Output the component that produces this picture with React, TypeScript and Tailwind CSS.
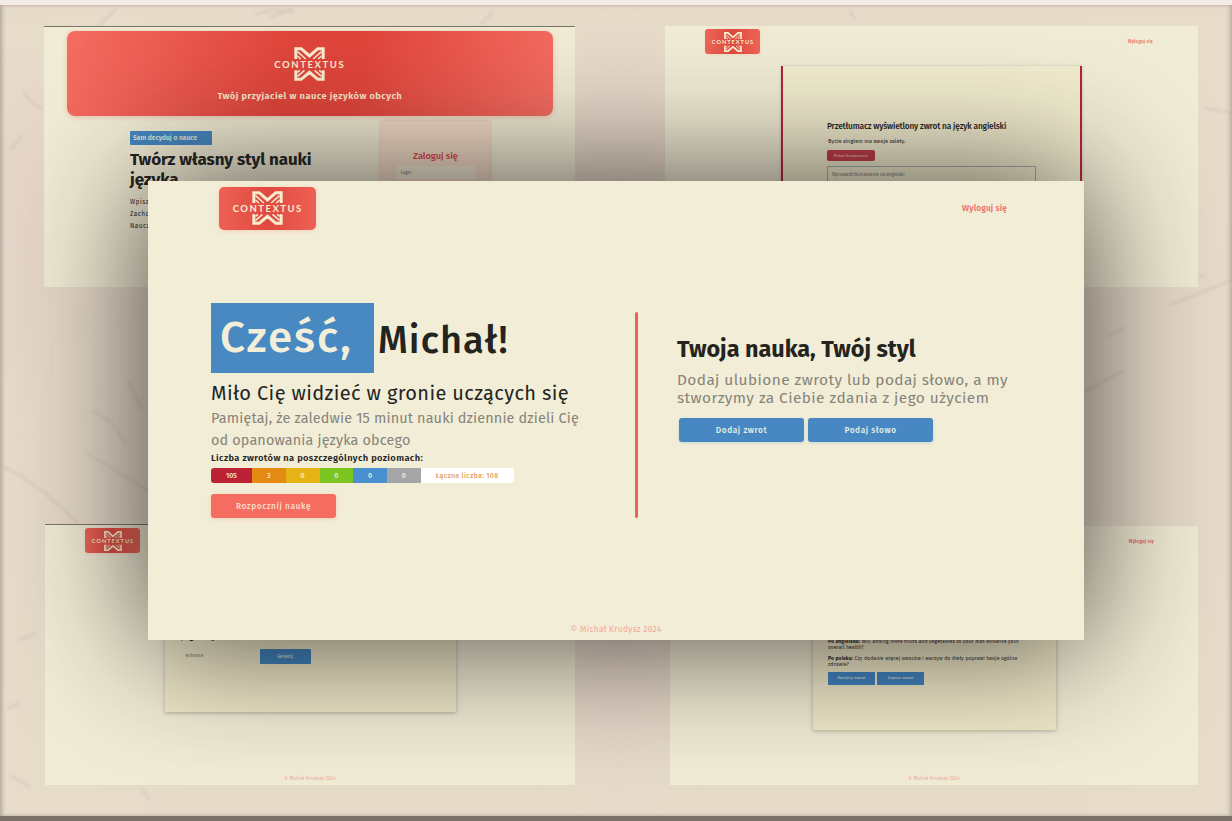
import type { ReactNode } from "react";

function Glyph({ className }: { className: string }) {
  return (
    <svg viewBox="0 0 90 102" className={className} fill="none" stroke="#f9edcf">
      <path d="M4 36V5H20L45 27L70 5H86V36" strokeWidth="9" />
      <path d="M9 14L34 36M9 27L19 36M81 14L56 36M81 27L71 36" strokeWidth="4.5" />
      <path d="M4 70V97H20L45 76L70 97H86V70" strokeWidth="9" />
      <path d="M9 88L30 70M9 76L16 70M81 88L60 70M81 76L74 70" strokeWidth="4.5" />
    </svg>
  );
}

function Logo({ small }: { small?: boolean }) {
  return small ? (
    <div className="grid h-[25px] w-[55px] shrink-0 place-items-center rounded-[3px] bg-linear-to-r from-[#ee6557] via-[#e0493f] to-[#ee6557] shadow-[0_1px_3px_#f3b7a455]">
      <Glyph className="col-start-1 row-start-1 h-[20px] w-[18px]" />
      <span className="col-start-1 row-start-1 pl-[1px] font-['Lato'] text-[5.6px] leading-none font-bold tracking-[1px] text-[#f9edcf]">CONTEXTUS</span>
    </div>
  ) : (
    <div className="grid h-[43.5px] w-[96.5px] shrink-0 place-items-center rounded-[5px] bg-linear-to-r from-[#ee6055] via-[#e0493f] to-[#ee6055] shadow-[0_1px_4px_#f3b7a488]">
      <Glyph className="col-start-1 row-start-1 h-[34px] w-[31px]" />
      <span className="col-start-1 row-start-1 pl-[1px] font-['Lato'] text-[9.5px] leading-none font-bold tracking-[1.5px] text-[#f9edcf]">CONTEXTUS</span>
    </div>
  );
}

function Backdrop() {
  return (
    <svg className="absolute inset-0 h-full w-full" viewBox="0 0 1232 821" preserveAspectRatio="none">
      <defs>
        <filter id="soft"><feGaussianBlur stdDeviation="1.6" /></filter>
        <filter id="cloud"><feGaussianBlur stdDeviation="28" /></filter>
      </defs>
      <rect width="1232" height="821" fill="#e7dbca" />
      <g filter="url(#cloud)" fill="#e6d6c9">
        <ellipse cx="20" cy="230" rx="40" ry="150" />
        <ellipse cx="620" cy="690" rx="40" ry="70" />
        <ellipse cx="620" cy="130" rx="40" ry="60" />
      </g>
      <g filter="url(#soft)" fill="none" stroke="#c5b8aa" strokeWidth="2" opacity="0.5">
        <path d="M98 26L117 8M255 15L272 10L295 12M270 17L292 9M480 25L493 12M850 10L855 20" />
        <path d="M22 90L30 100L42 109M10 150L22 136M0 465L20 475L45 493L78 523M85 452L110 467L130 480L148 490M92 410L110 422L126 443M128 380L142 410" />
        <path d="M1204 108Q1215 110 1232 113M1199 277L1205 276M1084 392L1100 383L1125 370M1170 305L1200 293L1232 280M1108 336L1125 328" />
        <path d="M18 640L35 634M8 708L20 703M10 775L30 787M140 787L150 800" />
      </g>
    </svg>
  );
}

function Screen({ className, children }: { className: string; children: ReactNode }) {
  return <section className={`absolute overflow-hidden bg-[#f1ecd5] ${className}`}>{children}</section>;
}

function LoginScreen() {
  return (
    <Screen className="top-[26px] left-[44px] h-[261px] w-[531px] border-t border-[#77756a]">
      <header className="mt-[4px] ml-[22.5px] flex h-[84.5px] w-[486.5px] flex-col items-center rounded-[8px] bg-[linear-gradient(100deg,#f56c61_0%,#e0453b_45%,#e0453b_60%,#f56c61_100%)] pt-[15px] shadow-[0_1px_5px_#e99c8c88]">
        <div className="grid h-[36px] place-items-center">
          <Glyph className="col-start-1 row-start-1 h-[34px] w-[31px]" />
          <span className="col-start-1 row-start-1 pt-[1px] font-['Lato'] text-[9.5px] leading-none font-bold tracking-[1.6px] text-[#f9edcf]">CONTEXTUS</span>
        </div>
        <p className="mt-[8px] text-[9.3px] leading-[12px] font-semibold tracking-[0.45px] text-[#f9edcf]">Twój przyjaciel w nauce języków obcych</p>
      </header>
      <div className="flex">
        <div className="ml-[86px] w-[251px] pt-[15.5px] text-[#24241f]">
          <p className="h-[13.5px] w-[81.5px] rounded-[1px] bg-[#4487c2] pl-[3px] text-[6.7px] leading-[14px] font-medium whitespace-nowrap text-[#eeeeda]">Sam decyduj o nauce</p>
          <h2 className="mt-[5.5px] w-[200px] text-[17px] leading-[19.5px] font-bold tracking-[-0.1px]">Twórz własny styl nauki języka</h2>
          <div className="mt-[6.5px] text-[6.3px] leading-[12px] tracking-[0.55px]">
            <p>Wpisz</p>
            <p>Zachowaj</p>
            <p>Naucz</p>
          </div>
        </div>
        <aside className="mt-[5px] flex h-[120px] w-[109px] flex-col items-center bg-[#f3dcc8] pt-[28px] shadow-[0_0_3px_#df7f7888]">
          <h3 className="text-[9.3px] leading-[14px] font-medium tracking-[-0.05px] text-[#dd3f43]">Zaloguj się</h3>
          <div className="mt-[3px] h-[13px] w-[80px] rounded-[2px] bg-[#f2e9d5] pl-[5px] text-[4.5px] leading-[13px] text-[#77776f]">Login</div>
        </aside>
      </div>
    </Screen>
  );
}

function TranslateScreen() {
  return (
    <Screen className="top-[26px] left-[665px] h-[261px] w-[533px]">
      <header className="flex items-start justify-between pt-[3px] pr-[45px] pl-[40px]">
        <Logo small />
        <span className="pt-[8px] text-[4.6px] leading-[9px] font-medium tracking-[0.15px] text-[#ee6f67]">Wyloguj się</span>
      </header>
      <div className="mt-[12px] ml-[116px] h-[260px] w-[301px] border-x-2 border-[#b8213a] bg-[#f2edcf] pt-[53px] pl-[44px] text-[#24241f] shadow-[0_0_3px_#77776655]">
        <h2 className="text-[8.3px] leading-[14px] font-medium tracking-[-0.14px] whitespace-nowrap">Przetłumacz wyświetlony zwrot na język angielski</h2>
        <p className="mt-[3px] pl-[1px] text-[5.6px] leading-[10.5px]">Bycie singlem ma swoje zalety.</p>
        <div className="mt-[3px] h-[11px] w-[48px] rounded-[2px] bg-[#c13b48] text-center text-[4.1px] leading-[11px] text-[#f3d9c8]">Pokaż tłumaczenie</div>
        <div className="mt-[5px] h-[30px] w-[209px] rounded-[1px] border border-[#a5aca6] pl-[4px] text-[4.5px] leading-[16px] text-[#77776f]">Wprowadź tłumaczenie na angielski</div>
      </div>
    </Screen>
  );
}

function GeneratorScreen() {
  return (
    <Screen className="top-[524px] left-[45px] h-[261px] w-[530px] border-t border-[#77756a]">
      <div className="pt-[3px] pl-[40px]"><Logo small /></div>
      <div className="ml-[119.5px] flex h-[158.5px] w-[291.5px] flex-col bg-[#f0e9ca] pt-[78px] pl-[17px] shadow-[0_1px_4px_#77776688]">
        <h2 className="text-[8px] leading-[12px] font-bold tracking-[0.6px] text-[#24241f]">jego użyciem.</h2>
        <div className="mt-[6px] flex items-center">
          <span className="w-[78px] pl-[4px] text-[4.6px] text-[#77776f]">enhance</span>
          <span className="h-[15px] w-[51px] rounded-[1px] bg-[#3e83c0] text-center text-[4.5px] leading-[15px] text-[#eeeeda]">Generuj</span>
        </div>
      </div>
      <footer className="mt-[62px] text-center text-[4.7px] leading-[10px] tracking-[0.2px] text-[#f1a497]">© Michał Krudysz 2024</footer>
    </Screen>
  );
}

function SentenceScreen() {
  return (
    <Screen className="top-[526px] left-[670px] h-[259px] w-[528px]">
      <header className="flex h-[28px] justify-end pt-[11px] pr-[44px] text-[4.6px] leading-[9px] font-medium tracking-[0.15px] text-[#e25853]">Wyloguj się</header>
      <div className="ml-[142.5px] h-[175.5px] w-[243px] rounded-[2px] bg-[#f0e9c9] pt-[84px] pl-[15.5px] text-[5.1px] leading-[6px] tracking-[0.11px] text-[#24241f] shadow-[0_1px_4px_#77776688]">
        <p className="whitespace-nowrap"><b>Po angielsku:</b> Will adding more fruits and vegetables to your diet enhance your<br />overall health?</p>
        <p className="mt-[4.5px] whitespace-nowrap"><b>Po polsku:</b> Czy dodanie więcej owoców i warzyw do diety poprawi twoje ogólne<br />zdrowie?</p>
        <div className="mt-[5.5px] flex gap-[2px] text-center text-[4.4px] leading-[12px] text-[#eeeeda]">
          <span className="h-[12.5px] w-[47px] rounded-[1px] bg-[#3e83c0]">Kolejny zwrot</span>
          <span className="h-[12.5px] w-[47px] rounded-[1px] bg-[#3e83c0]">Zapisz zwrot</span>
        </div>
      </div>
      <footer className="mt-[44.5px] text-center text-[4.7px] leading-[10px] tracking-[0.2px] text-[#f1a497]">© Michał Krudysz 2024</footer>
    </Screen>
  );
}

const levels = [
  { count: 105, style: "w-[41px] bg-[#bd2135]" },
  { count: 3, style: "w-[33.5px] bg-[#e58a12]" },
  { count: 0, style: "w-[34px] bg-[#e5b414]" },
  { count: 0, style: "w-[33.5px] bg-[#7cc520]" },
  { count: 0, style: "w-[34px] bg-[#4890d0]" },
  { count: 0, style: "w-[33.5px] bg-[#a5a5a7]" },
];

const action = "h-[24.5px] w-[125px] rounded-[3px] text-center text-[8.3px] leading-[25px] font-medium tracking-[0.6px]";

function Dashboard() {
  return (
    <main className="absolute top-[181px] left-[148px] flex h-[459px] w-[936px] flex-col bg-[#f2edd6] shadow-[0_0_120px_4px_rgba(22,18,16,0.74)]">
      <header className="flex h-[121px] items-start justify-between pt-[5.5px] pr-[77px] pl-[71px]">
        <Logo />
        <span className="pt-[15.5px] text-[8.4px] leading-[12px] font-semibold tracking-[0.15px] text-[#ef7269]">Wyloguj się</span>
      </header>
      <div className="flex flex-1 items-start">
        <section className="ml-[63px] w-[424px] text-[#24241f]">
          <h1 className="flex h-[70px] font-medium whitespace-nowrap">
            <span className="mt-[0.5px] h-[70px] w-[163px] bg-[#4989c2] pl-[9px] text-[44px] leading-[69px] tracking-[1.9px] text-[#f3eed9]">Cześć,</span>
            <span className="pl-[4px] text-[38px] leading-[76px] tracking-[1.1px]">Michał!</span>
          </h1>
          <p className="mt-[9px] text-[20px] leading-[25px] tracking-[0.37px] whitespace-nowrap">Miło Cię widzieć w gronie uczących się</p>
          <p className="mt-[1.5px] text-[14.4px] leading-[22px] tracking-[0.15px] whitespace-nowrap text-[#85837a]">Pamiętaj, że zaledwie 15 minut nauki dziennie dzieli Cię<br />od opanowania języka obcego</p>
          <p className="-mt-[1px] text-[9.3px] leading-[13px] font-semibold tracking-[0.37px]">Liczba zwrotów na poszczególnych poziomach:</p>
          <div className="mt-[4px] flex h-[15px] w-[302.5px] overflow-hidden rounded-[3px] text-center text-[7px] leading-[15px] font-medium text-[#f7eedb]">
            {levels.map((l, i) => <span key={i} className={l.style}>{l.count}</span>)}
            <span className="flex-1 bg-white tracking-[0.35px] text-[#e6a261]">Łączna liczba: 108</span>
          </div>
          <div className={`mt-[11px] bg-[#f56c60] text-[#f8dfc8] shadow-[0_1px_4px_#f3b7a488] ${action}`}>Rozpocznij naukę</div>
        </section>
        <div className="mt-[10px] h-[206px] w-[3px] rounded-full bg-[#ee6058]" />
        <section className="ml-[39px] pt-[33px] text-[#24241f]">
          <h2 className="text-[23.4px] leading-[28px] font-bold whitespace-nowrap">Twoja nauka, Twój styl</h2>
          <p className="mt-[8px] text-[15.4px] leading-[18px] tracking-[0.43px] whitespace-nowrap text-[#85837a]">Dodaj ulubione zwroty lub podaj słowo, a my<br />stworzymy za Ciebie zdania z jego użyciem</p>
          <div className="mt-[10.5px] ml-[2px] flex gap-[4px] text-[#e8efe3]">
            <div className={`bg-[#4788c2] shadow-[0_1px_3px_#9ec5dd88] ${action}`}>Dodaj zwrot</div>
            <div className={`bg-[#4788c2] shadow-[0_1px_3px_#9ec5dd88] ${action}`}>Podaj słowo</div>
          </div>
        </section>
      </div>
      <footer className="h-[18.5px] text-center text-[8.2px] leading-[14px] tracking-[0.38px] text-[#f3a597]">© Michał Krudysz 2024</footer>
    </main>
  );
}

export default function App() {
  return (
    <div className="relative h-[821px] w-[1232px] overflow-hidden font-['Fira_Sans','Noto_Sans',sans-serif]">
      <Backdrop />
      <LoginScreen />
      <TranslateScreen />
      <GeneratorScreen />
      <SentenceScreen />
      <Dashboard />
      <div className="pointer-events-none absolute inset-0 border-t-[5px] border-b-[5px] border-t-[#f3ece5] border-b-[#7b7168] shadow-[inset_3px_0_4px_-1px_#b0a59b,inset_-3px_0_4px_-1px_#b5aaa0]" />
    </div>
  );
}
